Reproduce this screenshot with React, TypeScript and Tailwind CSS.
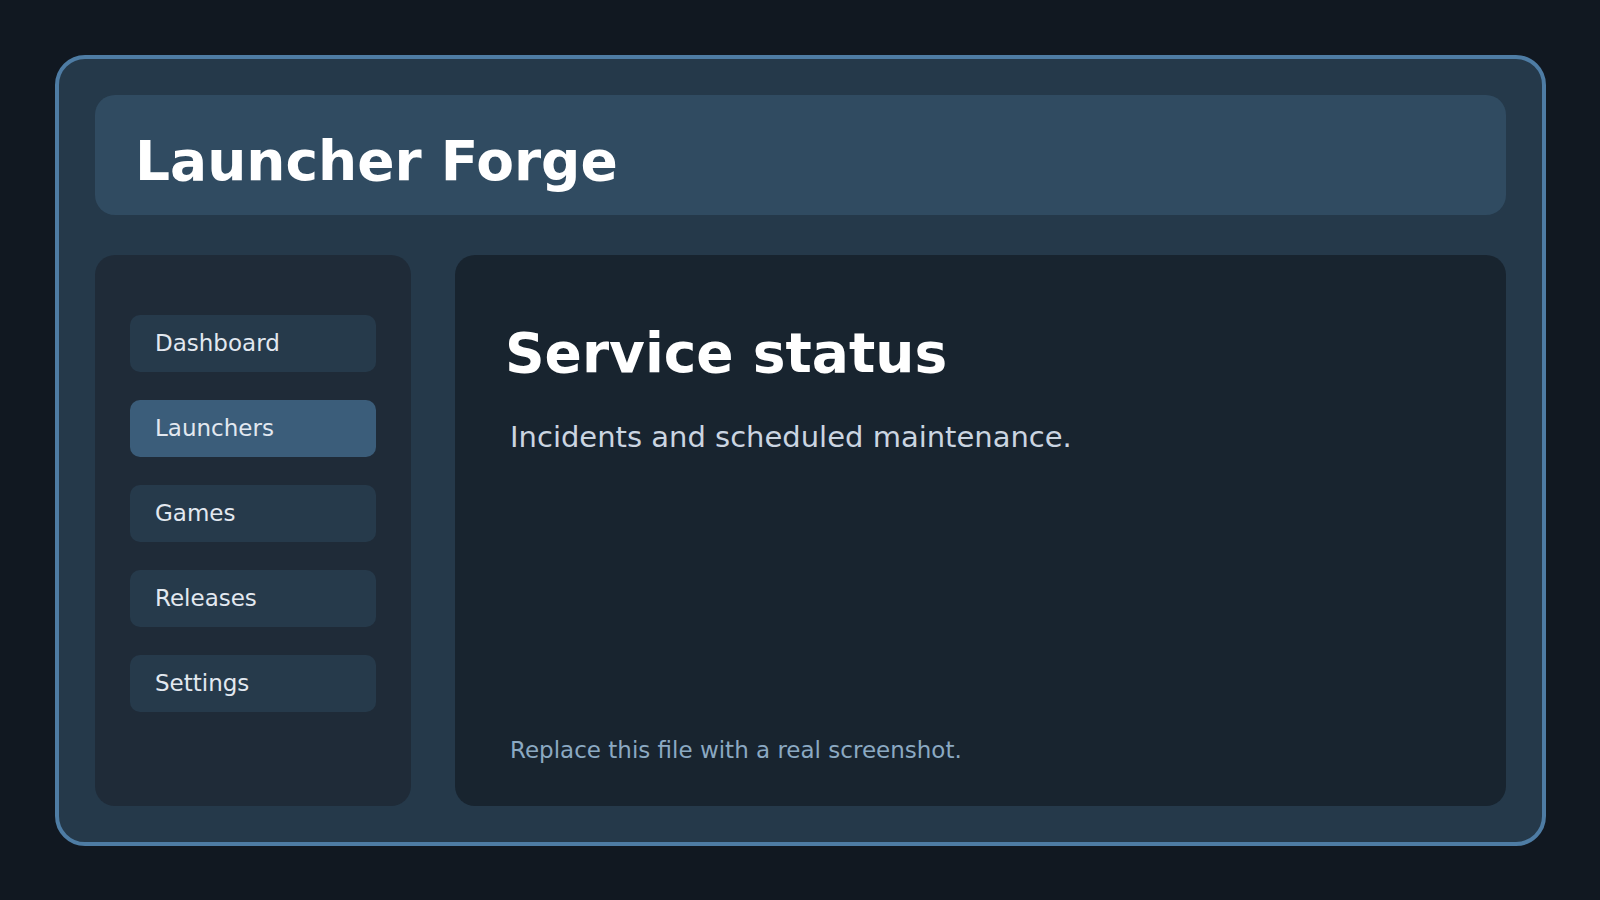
import React from 'react';

const navItems = ['Dashboard', 'Launchers', 'Games', 'Releases', 'Settings'];

export default function App() {
  const active = 'Launchers';

  return (
    <div
      className="w-full h-[900px] bg-[#111821] pl-[55px] pt-[55px] pr-[54px] pb-[54px]"
      style={{ fontFamily: '"DejaVu Sans", "Noto Sans", sans-serif' }}
    >
      <div className="h-full rounded-[30px] border-4 border-[#4e7ca4] bg-[#25394a] p-[36px] flex flex-col gap-[40px]">
        {/* ─── Header ─── */}
        <header className="h-[120px] shrink-0 rounded-[20px] bg-[#304b61] px-[40px] pt-[35px]">
          <h1 className="text-[55px] leading-[63px] font-bold text-white">Launcher Forge</h1>
        </header>

        <div className="flex-1 flex gap-[44px] min-h-0">
          {/* ─── Sidebar ─── */}
          <aside className="w-[316px] shrink-0 rounded-[20px] bg-[#1f2b38] px-[35px] pt-[60px]">
            <nav className="flex flex-col gap-[28px]">
              {navItems.map((item) => (
                <div
                  key={item}
                  className={`h-[57px] rounded-[10px] pl-[25px] flex items-center text-[23px] text-[#e2e8f0] ${
                    item === active ? 'bg-[#3b5d7a]' : 'bg-[#263a4b]'
                  }`}
                >
                  {item}
                </div>
              ))}
            </nav>
          </aside>

          {/* ─── Main ─── */}
          <main className="flex-1 rounded-[20px] bg-[#18242f] pl-[50px] pt-[67px] pb-[39px] flex flex-col">
            <h2 className="text-[55px] leading-[63px] font-bold text-white">Service status</h2>
            <p className="mt-[31px] ml-[5px] text-[29px] text-[#cbd5e1]">
              Incidents and scheduled maintenance.
            </p>
            <p className="mt-auto ml-[5px] text-[23px] text-[#8ba9c2]">
              Replace this file with a real screenshot.
            </p>
          </main>
        </div>
      </div>
    </div>
  );
}
